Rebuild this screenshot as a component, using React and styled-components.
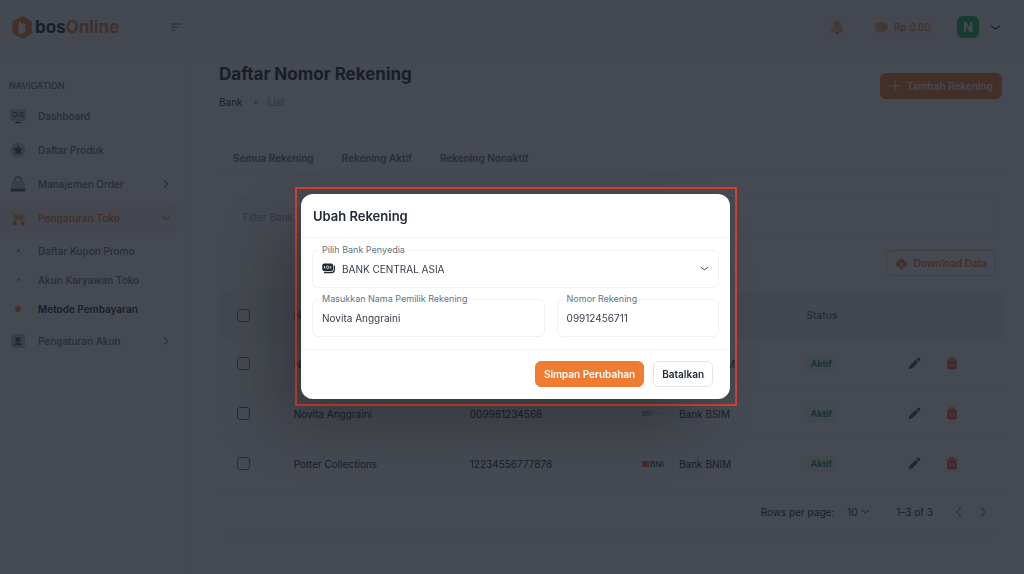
import { useState } from "react";
import styled, { createGlobalStyle } from "styled-components";

const ORANGE = "#f07c32";

const GlobalStyle = createGlobalStyle`
  * {
    box-sizing: border-box;
  }

  body {
    margin: 0;
    background: #fff;
    color: #212b36;
    font-family: "Inter", "Liberation Sans", sans-serif;
    font-size: 10px;
    line-height: 16px;
  }

  button, input, select {
    font: inherit;
    color: inherit;
  }

  button {
    padding: 0;
    border: none;
    background: none;
    cursor: pointer;
  }

  a {
    color: inherit;
    text-decoration: none;
  }

  ul {
    margin: 0;
    padding: 0;
    list-style: none;
  }

  svg {
    display: block;
    flex-shrink: 0;
  }
`;

const Page = styled.div`
  min-height: 100vh;
  display: flex;
  flex-direction: column;
`;

const Header = styled.header`
  display: flex;
  align-items: center;
  height: 59px;
  padding: 0 23px 5px 12px;
  background: #f9fafb;
`;

const Brand = styled.a`
  display: flex;
  align-items: center;
  gap: 2px;
  width: 159px;
  color: ${ORANGE};
  font-size: 17px;
  font-weight: 700;
  line-height: 24px;
`;

const BrandDark = styled.span`
  color: #0d2b45;
`;

const HeaderActions = styled.div`
  display: flex;
  align-items: center;
  gap: 18px;
  margin-left: auto;
`;

const SoftButton = styled.button`
  display: flex;
  align-items: center;
  justify-content: center;
  gap: 6px;
  min-width: 28px;
  height: 28px;
  padding: 0 5px;
  border-radius: 6px;
  background: #f8f4f2;
  color: ${ORANGE};
  font-weight: 500;
`;

const AccountButton = styled.button`
  display: flex;
  align-items: center;
  gap: 8px;
  color: #212b36;
`;

const Avatar = styled.span`
  width: 28px;
  height: 28px;
  border: 2px solid #f3f4f6;
  border-radius: 9px;
  padding: 1px;
  background: #22b455 content-box;
  color: #fff;
  font-size: 13px;
  font-weight: 700;
  line-height: 22px;
  overflow: hidden;
`;

const Body = styled.div`
  flex: 1;
  display: flex;
`;

const Sidebar = styled.nav`
  flex: 0 0 191px;
  padding: 19px 13px 0 0;
  border-right: 1px dashed #f1f3f5;
`;

const NavTitle = styled.div`
  padding-left: 9px;
  margin-bottom: 6px;
  color: #637381;
  font-size: 9px;
  font-weight: 500;
`;

const NavList = styled.ul`
  display: flex;
  flex-direction: column;
  gap: 2px;
`;

const NavLink = styled.a`
  display: flex;
  align-items: center;
  height: 32px;
  padding: 0 6px 0 10px;
  border-radius: 0 6px 6px 0;
  color: ${(props) => (props.$active ? ORANGE : "#637381")};
  background: ${(props) => (props.$active ? "#faf6f3" : "transparent")};
  font-weight: ${(props) => (props.$active ? 600 : 500)};
`;

const NavText = styled.span`
  flex: 1;
  padding-left: 12px;
`;

const SubList = styled.ul`
  padding-top: 2px;
`;

const SubLink = styled.a`
  display: flex;
  align-items: center;
  height: 29px;
  padding-left: 10px;
  color: ${(props) => (props.$active ? "#212b36" : "#637381")};
  font-weight: ${(props) => (props.$active ? 600 : 500)};
`;

const DotBox = styled.span`
  display: flex;
  justify-content: center;
  width: 16px;
`;

const Dot = styled.span`
  width: ${(props) => (props.$active ? 6 : 3)}px;
  height: ${(props) => (props.$active ? 6 : 3)}px;
  border-radius: 50%;
  background: ${(props) => (props.$active ? ORANGE : "#919eab")};
`;

const Main = styled.main`
  flex: 1;
  min-width: 0;
  padding: 3px 22px 38px 28px;
`;

const PageHead = styled.div`
  display: flex;
  align-items: center;
  justify-content: space-between;
`;

const PageTitle = styled.h1`
  margin: 0 0 8px;
  font-size: 17px;
  font-weight: 700;
  line-height: 24px;
`;

const Crumbs = styled.div`
  display: flex;
  align-items: center;
  gap: 11px;
`;

const CrumbCurrent = styled.span`
  color: #919eab;
`;

const Button = styled.button`
  display: flex;
  align-items: center;
  justify-content: center;
  gap: 6px;
  height: 26px;
  padding: 0 8px;
  border: 1px solid ${(props) => (props.$primary ? ORANGE : props.$accent ? "#f7c6a6" : "#e2e6e9")};
  border-radius: 6px;
  background: ${(props) => (props.$primary ? ORANGE : "transparent")};
  color: ${(props) => (props.$primary ? "#fff" : props.$accent ? ORANGE : "#212b36")};
  font-weight: 600;
  white-space: nowrap;
`;

const Card = styled.section`
  margin-top: 25px;
  border-radius: 12px;
  background: #fff;
  box-shadow: 0 8px 16px -4px rgba(145, 158, 171, 0.08);
`;

const Tabs = styled.div`
  display: flex;
  gap: 28px;
  padding: 0 14px;
  border-bottom: 1px solid #f4f6f8;
`;

const Tab = styled.button`
  height: 39px;
  padding-top: 7px;
  color: #637381;
  font-weight: 600;
`;

const Filters = styled.div`
  display: flex;
  gap: 12px;
  padding: 23px 6px 14px 14px;
`;

const FilterInput = styled.input`
  width: ${(props) => (props.$wide ? "auto" : "148px")};
  flex: ${(props) => (props.$wide ? 1 : "none")};
  height: 38px;
  padding: 0 9px;
  border: 1px solid #f1f3f5;
  border-radius: 6px;
  background: transparent;
  outline: none;

  &::placeholder {
    color: #919eab;
    opacity: 1;
  }
`;

const Toolbar = styled.div`
  display: flex;
  justify-content: flex-end;
  padding: 0 6px 15px;
`;

const Table = styled.table`
  width: 100%;
  table-layout: fixed;
  border-collapse: separate;
  border-spacing: 0;
  text-align: left;
`;

const Col = styled.col`
  width: ${(props) => props.$w};
`;

const Th = styled.th`
  height: 48px;
  padding: 0 12px;
  background: #f6f7f9;
  color: #637381;
  font-weight: 600;
`;

const Td = styled.td`
  height: 50px;
  padding: 0 12px;
  border-bottom: 1px dashed #f1f3f5;
`;

const Check = styled.input`
  appearance: none;
  display: block;
  width: 13px;
  height: 13px;
  margin: 0 0 0 6px;
  border: 1px solid #637381;
  border-radius: 3px;

  &:checked {
    background: ${ORANGE};
  }
`;

const BankCell = styled.div`
  display: flex;
  align-items: center;
`;

const BankLogo = styled.span`
  display: flex;
  align-items: center;
  gap: 1px;
  width: 37px;
  color: ${(props) => props.$color};
  font-size: ${(props) => props.$size}px;
  font-weight: 600;
`;

const Chip = styled.span`
  display: inline-block;
  padding: 0 4px;
  border-radius: 4px;
  background: #edf7f0;
  color: #118d57;
  font-size: 9px;
  font-weight: 700;
`;

const RowActions = styled.div`
  display: flex;
  gap: 25px;
`;

const Pagination = styled.div`
  display: flex;
  align-items: center;
  justify-content: flex-end;
  height: 45px;
  padding-right: 13px;
`;

const PageSize = styled.select`
  appearance: none;
  width: 14px;
  margin-left: 13px;
  padding: 0;
  border: none;
  background: none;
`;

const PageRange = styled.span`
  margin: 0 20px 0 26px;
`;

const PageArrows = styled.div`
  display: flex;
  gap: 12px;
  color: #919eab;
`;

const Backdrop = styled.div`
  position: fixed;
  inset: 0;
  z-index: 10;
  display: flex;
  align-items: center;
  justify-content: center;
  padding: 18px 0 0 8px;
  background: rgba(23, 27, 37, 0.8);
`;

const Highlight = styled.div`
  width: 442px;
  max-width: 100%;
  padding: 5px 5px 5px 4px;
  border: 2px solid #d3402a;
`;

const Dialog = styled.form`
  border-radius: 12px;
  background: #fff;
  box-shadow: -30px 30px 60px -6px rgba(0, 0, 0, 0.24);
`;

const DialogTitle = styled.h2`
  margin: 0;
  padding: 14px 12px 13px;
  border-bottom: 1px solid #f1f3f5;
  font-size: 13px;
  font-weight: 600;
  line-height: 16px;
`;

const DialogBody = styled.div`
  display: grid;
  grid-template-columns: 232fr 162fr;
  gap: 11px 12px;
  padding: 12px 11px;
`;

const Field = styled.div`
  position: relative;
  grid-column: ${(props) => (props.$full ? "1 / -1" : "auto")};
  display: flex;
  align-items: center;
  gap: 7px;
  height: 38px;
  padding: 0 9px;
  border: 1px solid #eff1f3;
  border-radius: 6px;
  color: #343e49;
`;

const FieldLabel = styled.label`
  position: absolute;
  top: -7px;
  left: 6px;
  padding: 0 3px;
  background: #fff;
  color: #637381;
  font-size: 9px;
  line-height: 12px;
`;

const FieldInput = styled.input`
  flex: 1;
  width: 100%;
  min-width: 0;
  padding: 0;
  border: none;
  background: none;
  outline: none;
`;

const FieldSelect = styled.select`
  appearance: none;
  flex: 1;
  min-width: 0;
  padding: 0;
  border: none;
  background: none;
  outline: none;
`;

const DialogFooter = styled.div`
  display: flex;
  justify-content: flex-end;
  gap: 9px;
  padding: 11px 17px 12px;
  border-top: 1px solid #f1f3f5;
`;

function Chevron({ dir = "down", size = 10 }) {
  const paths = {
    down: "M1.500 4.500 6 7.800l4.500-3.300",
    right: "M4.500 2 8 6l-3.500 4",
    left: "M7.500 2 4 6l3.500 4",
  };
  return (
    <svg width={size} height={size} viewBox="0 0 12 12" fill="none" stroke="currentColor" strokeWidth="1.3" strokeLinecap="round" strokeLinejoin="round">
      <path d={paths[dir]} />
    </svg>
  );
}

const LogoMark = () => (
  <svg width="21" height="23" viewBox="0 0 21 23">
    <path d="M8.6.8a3.6 3.6 0 0 1 3.6 0l6 3.4c1.4.8 2 1.8 2 3.2 0 1.7-.7 3-1.6 4 1 1 1.600 2.200 1.600 3.800 0 1.600-.7 2.700-2 3.400l-6 3.500a3.600 3.600 0 0 1-3.600 0l-6.600-3.800A3.600 3.600 0 0 1 .3 15.200V7.600c0-1.300.7-2.400 1.700-3z" fill={ORANGE} />
    <path d="M6.500 6.800 9 5.300v3.200l1.400-.8c1.400-.8 3.200-.1 3.200 1.500 0 1-.4 1.800-1 2.400.7.5 1.100 1.200 1.100 2.100 0 1.200-.6 2.100-1.600 2.700l-2.500 1.400c-1.400.7-3.100-.2-3.100-1.800z" fill="#fff" />
  </svg>
);

const MenuIcon = () => (
  <svg width="11" height="8" viewBox="0 0 11 8" stroke="#637381" strokeWidth="1.200" strokeLinecap="round">
    <path d="M.6 1h9.800M.6 4h6.400M.6 7h3" />
  </svg>
);

const BellIcon = () => (
  <svg width="14" height="16" viewBox="0 0 14 16">
    <path d="M7 1c-2.600 0-4 2-4 4.500C3 8.500.8 9.500.8 11.500c0 1 .7 1.500 1.700 1.500h9c1 0 1.700-.5 1.700-1.500 0-2-2.200-3-2.200-6C11 3 9.600 1 7 1z" fill="#f5b48a" />
    <path d="M4.500 13h5A2.600 2.600 0 0 1 7 15.200 2.600 2.600 0 0 1 4.500 13zM6.400 3.500h1.200V8H6.400z" fill={ORANGE} />
  </svg>
);

const WalletIcon = () => (
  <svg width="14" height="12" viewBox="0 0 14 12">
    <rect x="1" y="1" width="11" height="10" rx="2.500" fill="#f5b48a" />
    <path d="M2.500 3.200h4" stroke={ORANGE} />
    <rect x="7.500" y="3.500" width="6" height="5" rx="2.500" fill={ORANGE} />
    <circle cx="10.200" cy="6" r=".8" fill="#fff" />
  </svg>
);

const PlusIcon = () => (
  <svg width="12" height="12" viewBox="0 0 12 12" stroke="currentColor" strokeWidth="1.200" strokeLinecap="round">
    <path d="M6 1v10M1 6h10" />
  </svg>
);

const CloudIcon = () => (
  <svg width="13" height="13" viewBox="0 0 13 13">
    <path d="M4.800 10H3.600A2.900 2.900 0 0 1 3 4.300a3.700 3.700 0 0 1 7.100 0A2.900 2.900 0 0 1 9.600 10H8.300" fill="currentColor" />
    <path d="M6.500 5.500v6M4.600 9.800l1.900 2 1.900-2" stroke="#fff" strokeWidth="2.600" fill="none" />
    <path d="M6.500 6v6M4.700 10.300l1.800 1.900 1.800-1.900" stroke="currentColor" strokeWidth="1.200" fill="none" />
  </svg>
);

const PencilIcon = () => (
  <svg width="13" height="13" viewBox="0 0 13 13" fill="#455464">
    <path d="M7.700 2.800 10.200 5.300 5 10.500c-.5.500-1 .8-1.600 1L1 12.300c-.3.100-.5-.2-.4-.4l.8-2.400c.2-.6.500-1.100 1-1.500zM8.400 2.100l.9-.9a1.700 1.700 0 0 1 2.500 2.500l-.9.9z" />
  </svg>
);

const TrashIcon = () => (
  <svg width="12" height="13" viewBox="0 0 12 13">
    <path d="M.8 3.200h10.400M4 3V1.900C4 1.300 4.400 1 5 1h2c.6 0 1 .3 1 .9V3" fill="none" stroke="#ff5630" strokeWidth="1.300" strokeLinecap="round" />
    <path d="M1.300 4h9.400v6.600c0 1.200-.7 1.900-1.900 1.900H3.200c-1.200 0-1.900-.7-1.900-1.900z" fill="#ff5630" />
    <path d="M4.600 6.800v2.400M7.400 6.800v2.400" stroke="#fff" strokeLinecap="round" />
  </svg>
);

const CashIcon = () => (
  <svg width="13" height="11" viewBox="0 0 13 11">
    <rect x=".3" y=".6" width="10.700" height="7.400" rx="1.800" fill="#212b36" />
    <path d="M12.300 2.800v4c0 1.700-1 2.700-2.500 2.700H2.600" fill="none" stroke="#212b36" strokeWidth="1.300" strokeLinecap="round" />
    <circle cx="5.650" cy="4.300" r="1.300" fill="none" stroke="#fff" strokeWidth=".8" />
    <path d="M2.600 3v2.600M8.700 3v2.600" stroke="#fff" strokeWidth=".8" />
  </svg>
);

const navIcons = {
  monitor: (
    <svg width="16" height="16" viewBox="0 0 16 16">
      <rect width="16" height="12" y="1" rx="2.500" fill="#c0c7ce" />
      <circle cx="5" cy="6.500" r="2.200" fill="none" stroke="#637381" strokeWidth="1.200" />
      <path d="M9.500 4.500H14M9.500 6.500H14M9.500 8.500H14" stroke="#637381" />
      <path d="M4.500 15.300c0-1 1-1.600 3.500-1.600s3.500.6 3.500 1.600z" fill="#455464" />
    </svg>
  ),
  star: (
    <svg width="16" height="16" viewBox="0 0 16 16">
      <circle cx="8" cy="8" r="7.500" fill="#c0c7ce" />
      <path d="m8 3 1.500 3.300 3.600.4-2.700 2.400.8 3.600L8 10.900l-3.200 1.800.8-3.600-2.700-2.400 3.600-.4z" fill="#455464" />
    </svg>
  ),
  bag: (
    <svg width="16" height="16" viewBox="0 0 16 16">
      <path d="M4.800 6V4a3.200 3.200 0 0 1 6.400 0v2" fill="none" stroke="#637381" strokeWidth="1.300" />
      <path d="M3.600 4.800h8.800c1 0 1.600.5 1.800 1.400l1.200 6.800H.6l1.200-6.800c.2-.9.8-1.400 1.800-1.400z" fill="#c0c7ce" />
      <path d="M.6 12.800h14.800v1.400c0 .7-.5 1.300-1.300 1.300H1.900c-.8 0-1.300-.6-1.300-1.300z" fill="#455464" />
    </svg>
  ),
  cart: (
    <svg width="16" height="16" viewBox="0 0 16 16">
      <path d="M1 1.500 3 3l1.500 7.500h9" fill="none" stroke="#f5b48a" strokeWidth="1.200" />
      <path d="M3 4h12l-1.200 7H4.300z" fill="#f5b48a" />
      <path d="M7 6v3M11 6v3M6 7.500h2M10 7.500h2" stroke={ORANGE} strokeWidth="1.200" />
      <circle cx="5" cy="13.500" r="2" fill={ORANGE} />
      <circle cx="12.800" cy="13.500" r="2" fill={ORANGE} />
    </svg>
  ),
  user: (
    <svg width="16" height="16" viewBox="0 0 16 16">
      <rect x="1" y="1" width="14" height="14" rx="2" fill="#c0c7ce" />
      <circle cx="8" cy="6.500" r="2.600" fill="#455464" />
      <path d="M4 12.200c0-2 2-2.800 4-2.800s4 .8 4 2.800z" fill="#455464" />
    </svg>
  ),
};

const navItems = [
  { icon: "monitor", label: "Dashboard" },
  { icon: "star", label: "Daftar Produk" },
  { icon: "bag", label: "Manajemen Order", arrow: "right" },
  {
    icon: "cart",
    label: "Pengaturan Toko",
    arrow: "down",
    active: true,
    children: ["Daftar Kupon Promo", "Akun Karyawan Toko", "Metode Pembayaran"],
  },
  { icon: "user", label: "Pengaturan Akun", arrow: "right" },
];

const accounts = [
  { id: 1, name: "Novita Anggraini", number: "09912456711", bank: "Bank BCAM", logo: "BCA" },
  { id: 2, name: "Novita Anggraini", number: "009981234568", bank: "Bank BSIM", logo: "BSI" },
  { id: 3, name: "Potter Collections", number: "12234556777878", bank: "Bank BNIM", logo: "BNI" },
];

function Logo({ name }) {
  if (name === "BNI") {
    return (
      <BankLogo $color="#455464" $size={8}>
        <svg width="7" height="6" viewBox="0 0 7 6">
          <rect width="7" height="6" fill="#f15a23" />
          <path d="M1 0l2 3-2 3M4 0l2 3-1 3" stroke="#fff" strokeWidth=".6" fill="none" />
        </svg>
        BNI
      </BankLogo>
    );
  }
  return (
    <BankLogo $color={name === "BSI" ? "#00a39d" : "#1264ab"} $size={6}>
      {name}
      <svg width="10" height="3" viewBox="0 0 10 3">
        <path d="M0 1.500h10" stroke="#b9c4cc" strokeDasharray="1 .5" />
      </svg>
    </BankLogo>
  );
}

function EditDialog() {
  const [form, setForm] = useState({
    bank: "BANK CENTRAL ASIA",
    name: "Novita Anggraini",
    number: "09912456711",
  });

  const handleChange = (e) => {
    setForm({ ...form, [e.target.name]: e.target.value });
  };

  return (
    <Backdrop>
      <Highlight>
        <Dialog role="dialog" aria-labelledby="dialog-title" onSubmit={(e) => e.preventDefault()}>
          <DialogTitle id="dialog-title">Ubah Rekening</DialogTitle>
          <DialogBody>
            <Field $full>
              <FieldLabel htmlFor="bank">Pilih Bank Penyedia</FieldLabel>
              <CashIcon />
              <FieldSelect id="bank" name="bank" value={form.bank} onChange={handleChange}>
                <option>BANK CENTRAL ASIA</option>
              </FieldSelect>
              <Chevron size={9} />
            </Field>
            <Field>
              <FieldLabel htmlFor="name">Masukkan Nama Pemilik Rekening</FieldLabel>
              <FieldInput id="name" name="name" value={form.name} onChange={handleChange} />
            </Field>
            <Field>
              <FieldLabel htmlFor="number">Nomor Rekening</FieldLabel>
              <FieldInput id="number" name="number" value={form.number} onChange={handleChange} />
            </Field>
          </DialogBody>
          <DialogFooter>
            <Button type="submit" $primary>Simpan Perubahan</Button>
            <Button type="button">Batalkan</Button>
          </DialogFooter>
        </Dialog>
      </Highlight>
    </Backdrop>
  );
}

export default function App() {
  return (
    <>
      <GlobalStyle />
      <Page>
        <Header>
          <Brand href="#">
            <LogoMark />
            <span><BrandDark>bos</BrandDark>Online</span>
          </Brand>
          <button aria-label="Menu"><MenuIcon /></button>
          <HeaderActions>
            <SoftButton aria-label="Notifikasi"><BellIcon /></SoftButton>
            <SoftButton><WalletIcon />Rp 0.00</SoftButton>
            <AccountButton>
              <Avatar>N</Avatar>
              <Chevron size={11} />
            </AccountButton>
          </HeaderActions>
        </Header>
        <Body>
          <Sidebar>
            <NavTitle>NAVIGATION</NavTitle>
            <NavList>
              {navItems.map((item) => (
                <li key={item.label}>
                  <NavLink href="#" $active={item.active}>
                    {navIcons[item.icon]}
                    <NavText>{item.label}</NavText>
                    {item.arrow && <Chevron dir={item.arrow} />}
                  </NavLink>
                  {item.children && (
                    <SubList>
                      {item.children.map((child) => {
                        const active = child === "Metode Pembayaran";
                        return (
                          <li key={child}>
                            <SubLink href="#" $active={active}>
                              <DotBox><Dot $active={active} /></DotBox>
                              <NavText>{child}</NavText>
                            </SubLink>
                          </li>
                        );
                      })}
                    </SubList>
                  )}
                </li>
              ))}
            </NavList>
          </Sidebar>
          <Main>
            <PageHead>
              <div>
                <PageTitle>Daftar Nomor Rekening</PageTitle>
                <Crumbs>
                  <a href="#">Bank</a>
                  <Dot />
                  <CrumbCurrent>List</CrumbCurrent>
                </Crumbs>
              </div>
              <Button $primary><PlusIcon />Tambah Rekening</Button>
            </PageHead>
            <Card>
              <Tabs>
                <Tab>Semua Rekening</Tab>
                <Tab>Rekening Aktif</Tab>
                <Tab>Rekening Nonaktif</Tab>
              </Tabs>
              <Filters>
                <FilterInput aria-label="Filter Bank" placeholder="Filter Bank" />
                <FilterInput aria-label="Cari" $wide />
              </Filters>
              <Toolbar>
                <Button $accent><CloudIcon />Download Data</Button>
              </Toolbar>
              <Table>
                <colgroup>
                  <Col $w="8%" />
                  <Col $w="22.5%" />
                  <Col $w="22%" />
                  <Col $w="21%" />
                  <Col $w="13%" />
                  <Col $w="auto" />
                </colgroup>
                <thead>
                  <tr>
                    <Th><Check type="checkbox" aria-label="Pilih semua" /></Th>
                    <Th>Nama Pemilik</Th>
                    <Th>Nomor Rekening</Th>
                    <Th>Bank</Th>
                    <Th>Status</Th>
                    <Th />
                  </tr>
                </thead>
                <tbody>
                  {accounts.map((row) => (
                    <tr key={row.id}>
                      <Td><Check type="checkbox" aria-label={`Pilih ${row.number}`} /></Td>
                      <Td>{row.name}</Td>
                      <Td>{row.number}</Td>
                      <Td>
                        <BankCell>
                          <Logo name={row.logo} />
                          {row.bank}
                        </BankCell>
                      </Td>
                      <Td><Chip>Aktif</Chip></Td>
                      <Td>
                        <RowActions>
                          <button aria-label="Ubah"><PencilIcon /></button>
                          <button aria-label="Hapus"><TrashIcon /></button>
                        </RowActions>
                      </Td>
                    </tr>
                  ))}
                </tbody>
              </Table>
              <Pagination>
                <label htmlFor="page-size">Rows per page:</label>
                <PageSize id="page-size" defaultValue="10">
                  <option>10</option>
                  <option>25</option>
                </PageSize>
                <Chevron size={9} />
                <PageRange>1–3 of 3</PageRange>
                <PageArrows>
                  <button aria-label="Sebelumnya"><Chevron dir="left" size={12} /></button>
                  <button aria-label="Berikutnya"><Chevron dir="right" size={12} /></button>
                </PageArrows>
              </Pagination>
            </Card>
          </Main>
        </Body>
      </Page>
      <EditDialog />
    </>
  );
}
